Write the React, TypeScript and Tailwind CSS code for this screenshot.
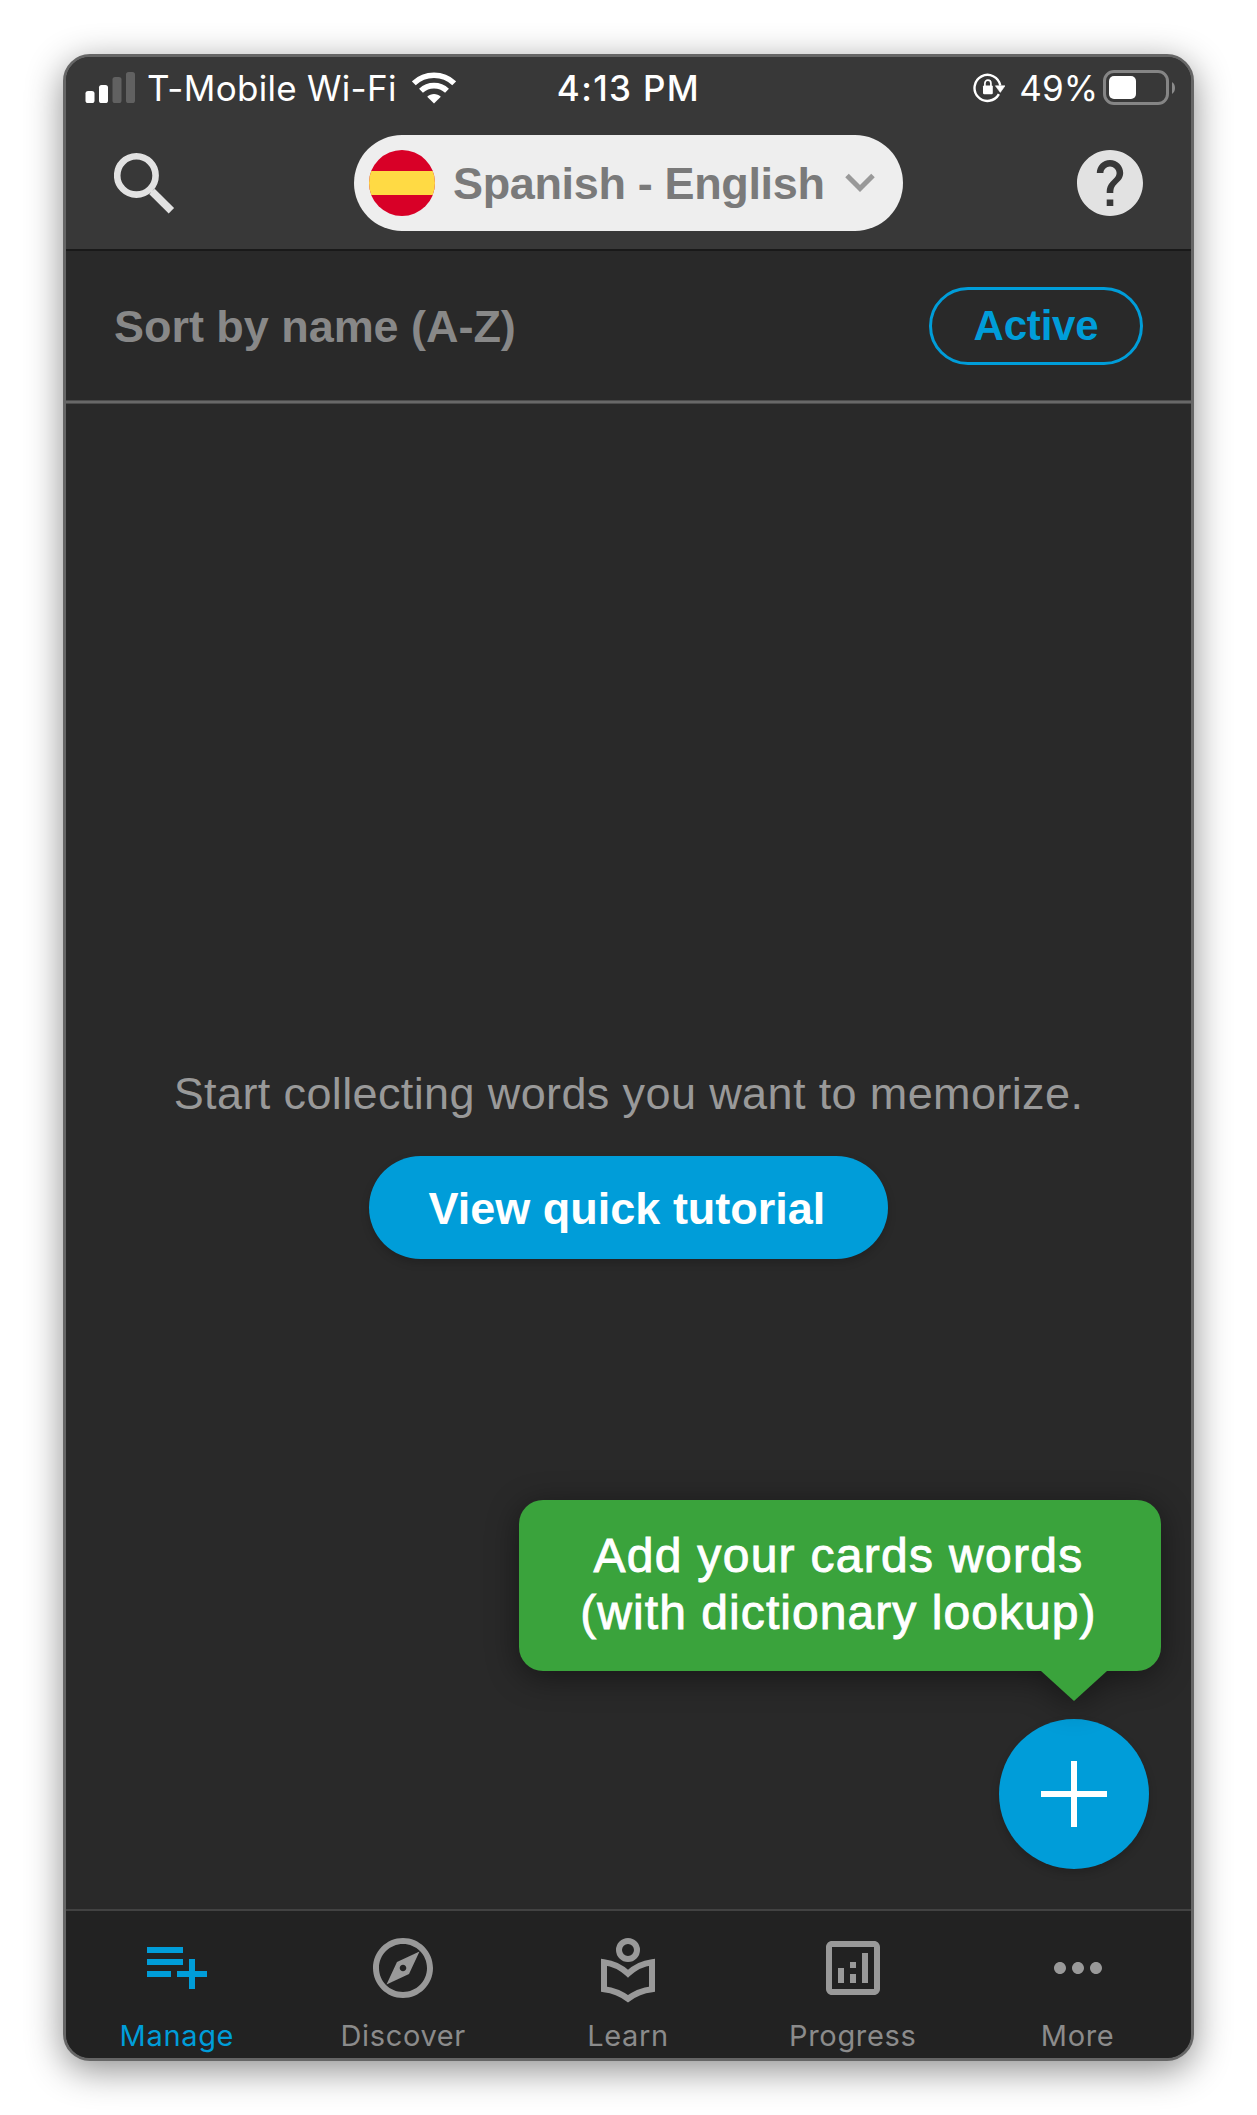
import type { ReactNode } from "react";
import { MdMoreHoriz, MdOutlineAnalytics, MdOutlineExplore } from "react-icons/md";

function SignalIcon() {
  return (
    <svg width="50" height="32" viewBox="0 0 50 32" className="mb-[3px] shrink-0">
      <rect x="0.5" y="20" width="9" height="12" rx="2.6" fill="#fff" />
      <rect x="14" y="14" width="9" height="18" rx="2.6" fill="#fff" />
      <rect x="27.5" y="6" width="9" height="26" rx="2.6" fill="#616161" />
      <rect x="41" y="1" width="9" height="31" rx="2.6" fill="#616161" />
    </svg>
  );
}

function WifiIcon() {
  return (
    <svg width="44" height="33" viewBox="0 0 44 33" className="mb-px shrink-0" fill="none" stroke="#fff">
      <path d="M1.8 12.3C13 1.6 31 1.6 42.2 12.3" strokeWidth="5.6" />
      <path d="M9 19.8C16.3 12.9 27.7 12.9 35 19.8" strokeWidth="5.6" />
      <path d="M22 32.5L15.2 25.8C19 22.2 25 22.2 28.8 25.8Z" fill="#fff" stroke="none" />
    </svg>
  );
}

function RotationLockIcon() {
  return (
    <svg width="32" height="32" viewBox="0 0 32 32" className="shrink-0" fill="none">
      <path d="M25.9 22.2A13 13 0 1 1 27.3 13.5" stroke="#fff" strokeWidth="2.4" />
      <path d="M22.4 13.8H32L27.3 20.4Z" fill="#fff" stroke="#fff" strokeWidth="0.6" />
      <rect x="10" y="13.4" width="9.8" height="8.8" rx="1.2" fill="#fff" />
      <path d="M11.9 14V11.2a3 3 0 0 1 6 0V14" stroke="#fff" strokeWidth="1.7" />
    </svg>
  );
}

function Battery() {
  return (
    <div className="flex items-center">
      <div className="h-[35px] w-[66px] rounded-[11px] border-[3px] border-[#858585] p-[3px]">
        <div className="h-[23px] w-[27px] rounded-[5px] bg-white" />
      </div>
      <svg width="3" height="12" viewBox="0 0 3 12" className="ml-[3px]">
        <path d="M0 0C4 2.5 4 9.5 0 12Z" fill="#8b8b8b" />
      </svg>
    </div>
  );
}

function SearchIcon() {
  return (
    <svg width="66" height="62" viewBox="0 0 66 62" fill="none" stroke="#e2e2e2">
      <circle cx="22.4" cy="23.4" r="19.2" strokeWidth="6.6" />
      <path d="M38 39.5L57.4 58.8" strokeWidth="7.6" />
      <path d="M36.9 43V38.4H41.5Z" fill="#e2e2e2" stroke="none" />
    </svg>
  );
}

function HelpIcon() {
  return (
    <svg width="66" height="66" viewBox="2 2 20 20" fill="#e2e2e2">
      <path d="M12 2C6.48 2 2 6.48 2 12s4.48 10 10 10 10-4.48 10-10S17.52 2 12 2zm1 17h-2v-2h2v2zm2.07-7.75l-.9.92C13.45 12.9 13 13.5 13 15h-2v-.5c0-1.1.45-2.1 1.17-2.83l1.24-1.26c.37-.36.59-.86.59-1.41 0-1.1-.9-2-2-2s-2 .9-2 2H8c0-2.21 1.79-4 4-4s4 1.79 4 4c0 .88-.36 1.68-.93 2.25z" />
    </svg>
  );
}

function ManageIcon() {
  return (
    <svg width="72" height="72" viewBox="0 0 72 72" fill="currentColor">
      <path d="M6 15h36v6H6zM6 27h36v6H6zM6 39h24v6H6zM48 27h6v12h12v6H54v12h-6V45H36v-6h12z" />
    </svg>
  );
}

function LearnIcon() {
  return (
    <svg width="72" height="72" viewBox="0 -1 24 24" fill="none" stroke="currentColor" strokeWidth="2">
      <circle cx="12" cy="5" r="3" />
      <path d="M4 9.06C7 9.4 9.8 10.8 12 12.9C14.2 10.8 17 9.4 20 9.06V18.06C17.1 18.4 14.3 19.5 12 21.25C9.7 19.5 6.9 18.4 4 18.06Z" />
    </svg>
  );
}

function Tab({ icon, label, active }: { icon: ReactNode; label: string; active?: boolean }) {
  return (
    <div className={active ? "flex w-1/5 flex-col items-center pr-[3px] text-[#009dd9]" : "flex w-1/5 flex-col items-center text-[#999]"}>
      {icon}
      <span className={active ? "mt-[14px] font-[Inter] text-[29px] leading-[35px] tracking-[0.66px]" : "mt-[14px] font-[Inter] text-[29px] leading-[35px] tracking-[0.66px] text-[#8b8b8b]"}>
        {label}
      </span>
    </div>
  );
}

export default function App() {
  return (
    <div className="flex h-[2115px] w-[1257px] items-start overflow-hidden bg-white pt-[54px] pl-[63px] font-['Liberation_Sans',Arial,sans-serif]">
      <div className="flex h-[2007px] w-[1131px] flex-col overflow-hidden rounded-[27px] border-[3px] border-[#666] bg-[#292929] shadow-[0_9px_36px_rgba(0,0,0,0.45)]">
        <header className="h-[194px] shrink-0 border-b-2 border-[#191919] bg-[#383838] pt-[10px]">
          <div className="grid h-[42px] grid-cols-[1fr_auto_1fr] items-center pr-[17px] pl-[19px] font-[Inter] text-[35px] leading-[42px] text-white">
            <div className="flex items-center">
              <SignalIcon />
              <span className="ml-[12px] tracking-[0.3px] whitespace-nowrap">T-Mobile Wi-Fi</span>
              <span className="ml-[15px]"><WifiIcon /></span>
            </div>
            <span className="pr-[2px] font-medium tracking-[1.36px]">4:13 PM</span>
            <div className="flex items-center justify-end">
              <RotationLockIcon />
              <span className="ml-[14px]">49%</span>
              <span className="-mr-px -mt-px ml-[5px]"><Battery /></span>
            </div>
          </div>
          <div className="mt-[26px] flex h-[96px] items-center justify-between px-[48px]">
            <SearchIcon />
            <button className="flex h-[96px] w-[549px] items-center rounded-full bg-[#eee] pl-[15px]">
              <span className="flex size-[66px] shrink-0 flex-col overflow-hidden rounded-full bg-[#d80027]">
                <span className="mt-[21px] h-[24px] bg-[#ffda44]" />
              </span>
              <span className="ml-[18px] text-[45px] leading-[45px] font-bold tracking-[-0.35px] whitespace-nowrap text-[#7a7a7a]">
                Spanish - English
              </span>
              <svg width="30" height="20" viewBox="0 0 30 20" className="ml-[20px] shrink-0" fill="none">
                <path d="M2 2.5L15 15.5L28 2.5" stroke="#999" strokeWidth="5" />
              </svg>
            </button>
            <HelpIcon />
          </div>
        </header>

        <div className="flex h-[149px] shrink-0 items-center justify-between px-[48px]">
          <span className="mt-px text-[45px] leading-[45px] font-bold tracking-[-0.04px] text-[#888]">Sort by name (A-Z)</span>
          <button className="flex h-[78px] w-[214px] items-center justify-center rounded-full border-[3px] border-[#009dd9] pt-px text-[42px] leading-[42px] font-bold tracking-[-0.2px] text-[#009dd9]">
            Active
          </button>
        </div>
        <div className="h-[4px] shrink-0 border-y border-[#4c4c4c] bg-[#686868]" />

        <main className="flex grow flex-col items-center pt-[667px]">
          <p className="text-[45px] leading-[45px] tracking-[0.38px] whitespace-nowrap text-[#999]">
            Start collecting words you want to memorize.
          </p>
          <button className="mt-[40px] h-[103px] w-[519px] rounded-full bg-[#009dd9] pt-[2px] pr-[3px] text-[45px] leading-[45px] font-bold text-white shadow-[0_4px_8px_rgba(0,0,0,0.18)]">
            View quick tutorial
          </button>
          <div className="mt-[241px] flex w-full flex-col items-end">
            <div className="relative z-10 mr-[30px] h-[171px] w-[642px] rounded-[24px] bg-[#3aa33c] pt-[27px] pr-[3px] text-center text-[48px] leading-[57px] whitespace-nowrap text-white drop-shadow-[0_6px_16px_rgba(0,0,0,0.45)] [-webkit-text-stroke:0.9px_white]">
              <p className="tracking-[1.3px]">Add your cards words</p>
              <p className="tracking-[1.06px]">(with dictionary lookup)</p>
              <svg width="66" height="31" viewBox="0 0 66 31" className="absolute top-[170px] right-[54px]">
                <path d="M0 0H66V1L33 31L0 1Z" fill="#3aa33c" />
              </svg>
            </div>
            <button className="mt-[48px] mr-[42px] flex size-[150px] items-center justify-center rounded-full bg-[#009dd9] shadow-[0_4px_8px_rgba(0,0,0,0.18)]">
              <svg width="66" height="66" viewBox="0 0 66 66">
                <path d="M30 0h6v30h30v6H36v30h-6V36H0v-6h30z" fill="#fff" />
              </svg>
            </button>
          </div>
        </main>

        <nav className="flex h-[149px] shrink-0 border-t-2 border-[#424242] bg-[#222] pt-[21px] pr-px">
          <Tab icon={<ManageIcon />} label="Manage" active />
          <Tab icon={<MdOutlineExplore size={72} />} label="Discover" />
          <Tab icon={<LearnIcon />} label="Learn" />
          <Tab icon={<MdOutlineAnalytics size={72} />} label="Progress" />
          <Tab icon={<MdMoreHoriz size={72} />} label="More" />
        </nav>
      </div>
    </div>
  );
}
